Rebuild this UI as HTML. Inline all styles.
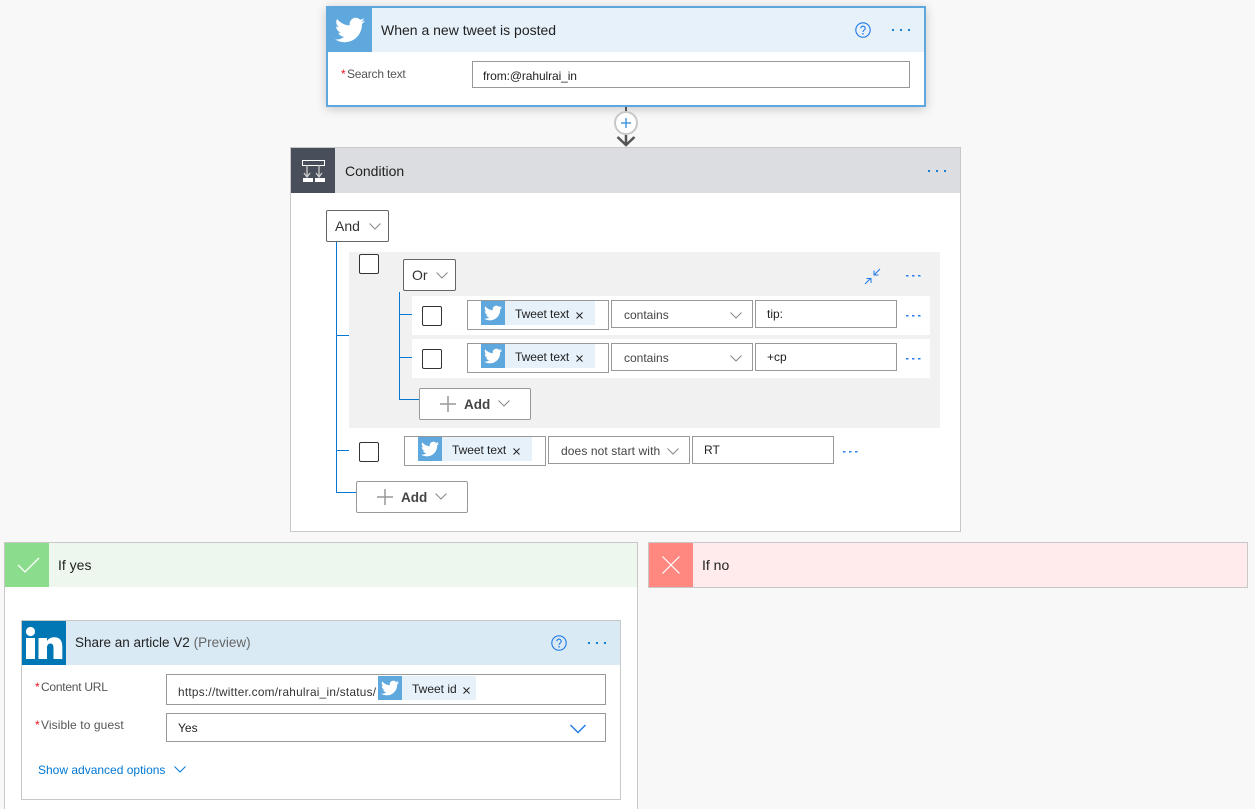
<!DOCTYPE html>
<html><head><meta charset="utf-8"><title>Flow</title>
<style>
html,body{margin:0;padding:0;width:1255px;height:809px;overflow:hidden;background:#f8f8f8;font-family:"Liberation Sans",sans-serif;color:#222}
#r{position:relative;width:1255px;height:809px;overflow:hidden}
.a{position:absolute;box-sizing:border-box}
.t{position:absolute;white-space:nowrap;line-height:16px}
.inp{position:absolute;box-sizing:border-box;border:1px solid #999;background:#fff}
.dd{position:absolute;box-sizing:border-box;border:1px solid #666;border-radius:2px;background:#fff}
.add{position:absolute;box-sizing:border-box;border:1px solid #999;border-radius:2px;background:#fff}
.cb{position:absolute;box-sizing:border-box;width:20px;height:20px;border:1px solid #333;border-radius:2px;background:#fff}
.bl{position:absolute;background:#0078d4}
.s12{font-size:12px}.s14{font-size:14px}.s13{font-size:13px}
svg{position:absolute;overflow:visible}
</style></head><body><div id="r">
<svg width="0" height="0" style="position:absolute"><defs>
<symbol id="tw" viewBox="0 0 24 24"><path fill="#fff" d="M23.953 4.57a10 10 0 01-2.825.775 4.958 4.958 0 002.163-2.723c-.951.555-2.005.959-3.127 1.184a4.92 4.92 0 00-8.384 4.482C7.69 8.095 4.067 6.13 1.64 3.162a4.822 4.822 0 00-.666 2.475c0 1.71.87 3.213 2.188 4.096a4.904 4.904 0 01-2.228-.616v.06a4.923 4.923 0 003.946 4.827 4.996 4.996 0 01-2.212.085 4.936 4.936 0 004.604 3.417 9.867 9.867 0 01-6.102 2.105c-.39 0-.779-.023-1.17-.067a13.995 13.995 0 007.557 2.209c9.053 0 13.998-7.496 13.998-13.985 0-.21 0-.42-.015-.63A9.935 9.935 0 0024 4.59z"/></symbol>
<symbol id="dots" viewBox="0 0 20 4"><circle cx="2" cy="2" r="1.100" fill="#0078d4"/><circle cx="10" cy="2" r="1.100" fill="#0078d4"/><circle cx="18" cy="2" r="1.100" fill="#0078d4"/></symbol>
<symbol id="sd" viewBox="0 0 15 2"><rect x="0" y="0" width="2.500" height="1.500" fill="#2b7cf0"/><rect x="6" y="0" width="2.500" height="1.500" fill="#2b7cf0"/><rect x="12" y="0" width="2.500" height="1.500" fill="#2b7cf0"/></symbol>
<symbol id="chev" viewBox="0 0 12 7"><path d="M.5.5L6 6l5.500-5.500" fill="none" stroke="#888" stroke-width="1"/></symbol>
<symbol id="bchev" viewBox="0 0 16 10"><path d="M.5 1L8 8.500 15.500 1" fill="none" stroke="#1e78e6" stroke-width="1.400"/></symbol>
<symbol id="plus" viewBox="0 0 16 16"><path d="M8 0v16M0 8h16" stroke="#999" stroke-width="1.500" fill="none"/></symbol>
<symbol id="help" viewBox="0 0 16 16"><circle cx="8" cy="8" r="7.200" fill="none" stroke="#1e78e6" stroke-width="1.100"/><path d="M5.800 6.200a2.200 2.200 0 1 1 3.400 1.900C8.400 8.600 8 9 8 10" fill="none" stroke="#1e78e6" stroke-width="1.100"/><circle cx="8" cy="11.800" r=".8" fill="#1e78e6"/></symbol>
<symbol id="x" viewBox="0 0 7 7"><path d="M.5.500l6 6M6.500.500l-6 6" stroke="#222" stroke-width="1" fill="none"/></symbol>
</defs></svg>

<!-- Trigger card -->
<div class="a" style="left:326px;top:6px;width:600px;height:101px;border:2px solid #5ea8de;background:#fff;box-shadow:0 2px 10px rgba(0,0,0,.2)"></div>
<div class="a" style="left:328px;top:8px;width:596px;height:44px;background:#e6f1fa"></div>
<div class="a" style="left:328px;top:8px;width:44px;height:44px;background:#5ea8de"></div>
<svg style="left:335px;top:15px" width="30" height="30"><use href="#tw" width="30" height="30"/></svg>
<div class="t s14" style="left:381px;top:22px">When a new tweet is posted</div>
<svg style="left:855px;top:22px" width="16" height="16"><use href="#help" width="16" height="16"/></svg>
<svg style="left:891px;top:28px" width="20" height="4"><use href="#dots" width="20" height="4"/></svg>
<div class="t s12" style="left:341px;top:66px;color:#e81123">*</div>
<div class="t s12" style="left:347px;top:66px;color:#555;letter-spacing:-.2px">Search text</div>
<div class="inp" style="left:472px;top:61px;width:438px;height:27px"></div>
<div class="t s12" style="left:483px;top:68px;letter-spacing:-.1px">from:@rahulrai_in</div>

<!-- Connector -->
<div class="a" style="left:625px;top:107px;width:2px;height:6px;background:#555"></div>
<div class="a" style="left:614px;top:111px;width:24px;height:24px;border:2px solid #c8c8c8;border-radius:50%;background:#fff"></div>
<svg style="left:620px;top:117px" width="12" height="12"><path d="M6 1v10M1 6h10" stroke="#2b88d8" stroke-width="1.300" fill="none"/></svg>
<svg style="left:616px;top:134px" width="20" height="13"><path d="M1.500 3l8.500 8 8.500-8M10 1v10" stroke="#555" stroke-width="2.500" fill="none"/></svg>

<!-- Condition card -->
<div class="a" style="left:290px;top:147px;width:671px;height:385px;border:1px solid #c8c8c8;background:#fff"></div>
<div class="a" style="left:291px;top:148px;width:669px;height:45px;background:#dcdde0"></div>
<div class="a" style="left:291px;top:148px;width:44px;height:45px;background:#484f5a"></div>
<svg style="left:291px;top:147px" width="44" height="45"><rect x="11.500" y="13.500" width="22" height="5" fill="none" stroke="#fff"/><path d="M16 18v12M13 26l3 4 3-4M28 18v12M25 26l3 4 3-4" fill="none" stroke="#ccc" stroke-width="1.300"/><rect x="12" y="31" width="10" height="4" fill="#fff"/><rect x="24" y="31" width="10" height="4" fill="#fff"/></svg>
<div class="t s14" style="left:345px;top:163px">Condition</div>
<svg style="left:927px;top:169px" width="20" height="4"><use href="#dots" width="20" height="4"/></svg>

<!-- And -->
<div class="bl" style="left:336px;top:242px;width:1px;height:251px"></div>
<div class="bl" style="left:336px;top:335px;width:13px;height:1px"></div>
<div class="bl" style="left:336px;top:450px;width:13px;height:1px"></div>
<div class="bl" style="left:336px;top:492px;width:20px;height:1px"></div>
<div class="dd" style="left:326px;top:210px;width:63px;height:32px"></div>
<div class="t s14" style="left:335px;top:218px;color:#333">And</div>
<svg style="left:369px;top:223px" width="12" height="7"><use href="#chev" width="12" height="7"/></svg>

<!-- Or group -->
<div class="a" style="left:349px;top:252px;width:591px;height:176px;background:#f1f1f1"></div>
<div class="cb" style="left:359px;top:254px"></div>
<div class="dd" style="left:403px;top:259px;width:53px;height:32px"></div>
<div class="t s14" style="left:412px;top:267px;color:#333">Or</div>
<svg style="left:436px;top:272px" width="12" height="7"><use href="#chev" width="12" height="7"/></svg>
<svg style="left:864px;top:268px" width="17" height="17"><path d="M1 16L7 10M2.500 10.500H7V15M16 1l-6 6M10 2.500V7h4.500" fill="none" stroke="#1e78e6" stroke-width="1"/></svg>
<svg style="left:906px;top:275px" width="15" height="2"><use href="#sd" width="15" height="2"/></svg>
<div class="bl" style="left:399px;top:292px;width:1px;height:108px"></div>
<div class="bl" style="left:399px;top:314px;width:13px;height:1px"></div>
<div class="bl" style="left:399px;top:357px;width:13px;height:1px"></div>
<div class="bl" style="left:399px;top:399px;width:20px;height:1px"></div>

<!-- Row 1 -->
<div class="a" style="left:412px;top:296px;width:518px;height:39px;background:#fff"></div>
<div class="cb" style="left:422px;top:306px"></div>
<div class="inp" style="left:467px;top:300px;width:142px;height:30px"></div>
<div class="a" style="left:481px;top:301px;width:114px;height:24px;background:#e6f1fa"></div>
<div class="a" style="left:481px;top:301px;width:24px;height:24px;background:#5ea8de"></div>
<svg style="left:484px;top:304px" width="18" height="18"><use href="#tw" width="18" height="18"/></svg>
<div class="t s12" style="left:515px;top:306px;letter-spacing:-.05px">Tweet text</div>
<svg style="left:576px;top:312px" width="7" height="7"><use href="#x" width="7" height="7"/></svg>
<div class="inp" style="left:611px;top:300px;width:142px;height:28px"></div>
<div class="t s12" style="left:624px;top:307px;color:#444">contains</div>
<svg style="left:730px;top:312px" width="12" height="7"><use href="#chev" width="12" height="7"/></svg>
<div class="inp" style="left:755px;top:300px;width:142px;height:28px"></div>
<div class="t s12" style="left:767px;top:306px">tip:</div>
<svg style="left:906px;top:315px" width="15" height="2"><use href="#sd" width="15" height="2"/></svg>

<!-- Row 2 -->
<div class="a" style="left:412px;top:339px;width:518px;height:39px;background:#fff"></div>
<div class="cb" style="left:422px;top:349px"></div>
<div class="inp" style="left:467px;top:343px;width:142px;height:30px"></div>
<div class="a" style="left:481px;top:344px;width:114px;height:24px;background:#e6f1fa"></div>
<div class="a" style="left:481px;top:344px;width:24px;height:24px;background:#5ea8de"></div>
<svg style="left:484px;top:347px" width="18" height="18"><use href="#tw" width="18" height="18"/></svg>
<div class="t s12" style="left:515px;top:349px;letter-spacing:-.05px">Tweet text</div>
<svg style="left:576px;top:355px" width="7" height="7"><use href="#x" width="7" height="7"/></svg>
<div class="inp" style="left:611px;top:343px;width:142px;height:28px"></div>
<div class="t s12" style="left:624px;top:350px;color:#444">contains</div>
<svg style="left:730px;top:355px" width="12" height="7"><use href="#chev" width="12" height="7"/></svg>
<div class="inp" style="left:755px;top:343px;width:142px;height:28px"></div>
<div class="t s12" style="left:767px;top:349px">+cp</div>
<svg style="left:906px;top:358px" width="15" height="2"><use href="#sd" width="15" height="2"/></svg>

<!-- Add inner -->
<div class="add" style="left:419px;top:388px;width:112px;height:32px"></div>
<svg style="left:440px;top:396px" width="16" height="16"><use href="#plus" width="16" height="16"/></svg>
<div class="t s14" style="left:464px;top:397px;color:#444;font-weight:bold;font-size:13.500px">Add</div>
<svg style="left:498px;top:400px" width="12" height="7"><use href="#chev" width="12" height="7"/></svg>

<!-- Row 3 -->
<div class="cb" style="left:359px;top:442px"></div>
<div class="inp" style="left:404px;top:436px;width:142px;height:30px"></div>
<div class="a" style="left:418px;top:437px;width:114px;height:24px;background:#e6f1fa"></div>
<div class="a" style="left:418px;top:437px;width:24px;height:24px;background:#5ea8de"></div>
<svg style="left:421px;top:440px" width="18" height="18"><use href="#tw" width="18" height="18"/></svg>
<div class="t s12" style="left:452px;top:442px;letter-spacing:-.05px">Tweet text</div>
<svg style="left:513px;top:448px" width="7" height="7"><use href="#x" width="7" height="7"/></svg>
<div class="inp" style="left:548px;top:436px;width:142px;height:28px"></div>
<div class="t s12" style="left:561px;top:443px;color:#444;letter-spacing:.1px">does not start with</div>
<svg style="left:667px;top:448px" width="12" height="7"><use href="#chev" width="12" height="7"/></svg>
<div class="inp" style="left:692px;top:436px;width:142px;height:28px"></div>
<div class="t s12" style="left:704px;top:442px">RT</div>
<svg style="left:843px;top:451px" width="15" height="2"><use href="#sd" width="15" height="2"/></svg>

<!-- Add outer -->
<div class="add" style="left:356px;top:481px;width:112px;height:32px"></div>
<svg style="left:377px;top:489px" width="16" height="16"><use href="#plus" width="16" height="16"/></svg>
<div class="t s14" style="left:401px;top:490px;color:#444;font-weight:bold;font-size:13.500px">Add</div>
<svg style="left:435px;top:493px" width="12" height="7"><use href="#chev" width="12" height="7"/></svg>

<!-- If yes -->
<div class="a" style="left:4px;top:542px;width:634px;height:280px;border:1px solid #c8c8c8;background:#fff"></div>
<div class="a" style="left:5px;top:543px;width:632px;height:44px;background:#edf7ee"></div>
<div class="a" style="left:5px;top:543px;width:44px;height:44px;background:#8bdc8c"></div>
<svg style="left:5px;top:543px" width="44" height="44"><path d="M13 22l7 7 14-14" fill="none" stroke="#fff" stroke-width="1.300"/></svg>
<div class="t s14" style="left:58px;top:557px">If yes</div>

<!-- If no -->
<div class="a" style="left:648px;top:542px;width:600px;height:46px;border:1px solid #c8c8c8;background:#ffebeb"></div>
<div class="a" style="left:649px;top:543px;width:44px;height:44px;background:#ff8881"></div>
<svg style="left:649px;top:543px" width="44" height="44"><path d="M13.500 13.500l17 17M30.500 13.500l-17 17" fill="none" stroke="#fff" stroke-width="1.200"/></svg>
<div class="t s14" style="left:702px;top:557px">If no</div>

<!-- LinkedIn card -->
<div class="a" style="left:21px;top:620px;width:600px;height:180px;border:1px solid #c8c8c8;background:#fff"></div>
<div class="a" style="left:22px;top:621px;width:598px;height:44px;background:#d9eaf5"></div>
<div class="a" style="left:22px;top:621px;width:44px;height:44px;background:#0077b5"></div>
<svg style="left:22px;top:621px" width="44" height="44"><circle cx="8.500" cy="10.500" r="4.600" fill="#fff"/><rect x="4" y="17" width="9" height="21" fill="#fff"/><path d="M16.500 17h8.500v3c1.500-2.300 4-3.700 7-3.700 6 0 8.300 3.500 8.300 9.500V38h-8.800V27c0-2.800-.8-4.500-3.200-4.500S25 24.500 25 27v11h-8.500z" fill="#fff"/></svg>
<div class="t" style="left:75px;top:635px;font-size:13.500px">Share an article V2 <span style="color:#666">(Preview)</span></div>
<svg style="left:551px;top:635px" width="16" height="16"><use href="#help" width="16" height="16"/></svg>
<svg style="left:587px;top:641px" width="20" height="4"><use href="#dots" width="20" height="4"/></svg>
<div class="t s12" style="left:35px;top:679px;color:#e81123">*</div>
<div class="t s12" style="left:41px;top:679px;color:#555;letter-spacing:-.25px">Content URL</div>
<div class="inp" style="left:166px;top:674px;width:440px;height:31px"></div>
<div class="t s12" style="left:178px;top:684px;color:#333;font-size:11.800px;letter-spacing:.26px">https://twitter.com/rahulrai_in/status/</div>
<div class="a" style="left:378px;top:676px;width:98px;height:24px;background:#e6f1fa"></div>
<div class="a" style="left:378px;top:676px;width:24px;height:24px;background:#5ea8de"></div>
<svg style="left:381px;top:679px" width="18" height="18"><use href="#tw" width="18" height="18"/></svg>
<div class="t s12" style="left:412px;top:681px">Tweet id</div>
<svg style="left:463px;top:687px" width="7" height="7"><use href="#x" width="7" height="7"/></svg>
<div class="t s12" style="left:35px;top:717px;color:#e81123">*</div>
<div class="t s12" style="left:41px;top:717px;color:#555;letter-spacing:.1px">Visible to guest</div>
<div class="inp" style="left:166px;top:713px;width:440px;height:29px"></div>
<div class="t s12" style="left:178px;top:720px">Yes</div>
<svg style="left:570px;top:724px" width="16" height="10"><use href="#bchev" width="16" height="10"/></svg>
<div class="t s12" style="left:38px;top:762px;color:#0078d4">Show advanced options</div>
<svg style="left:174px;top:766px" width="12" height="7"><path d="M.5.500L6 6l5.500-5.500" fill="none" stroke="#0078d4"/></svg>
</div></body></html>
